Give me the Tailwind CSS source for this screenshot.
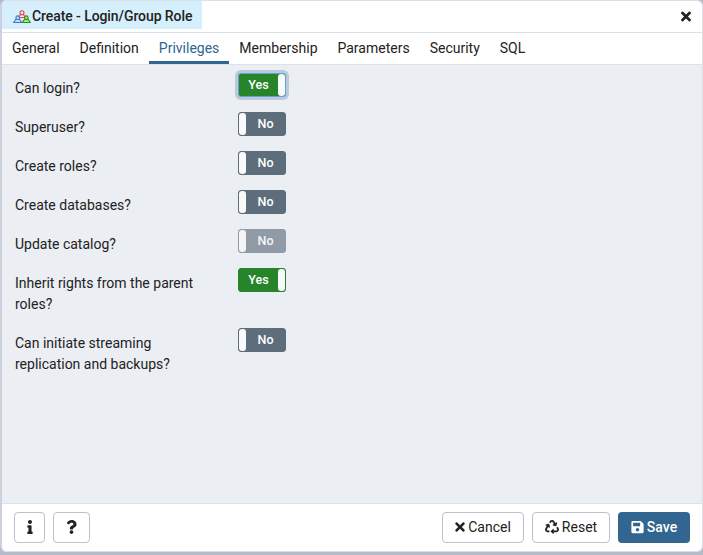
<!DOCTYPE html>
<html lang="en">
<head>
<meta charset="utf-8">
<title>Create - Login/Group Role</title>
<script src="https://cdn.jsdelivr.net/npm/@tailwindcss/browser@4"></script>
</head>
<body class="h-[555px] w-[703px] overflow-hidden bg-[#b3bccb] font-['Roboto','Liberation_Sans',sans-serif] text-sm/[21px] text-[#222]">
<svg class="hidden">
  <symbol id="close" viewBox="0 0 352 512"><path d="M242.72 256l100.07-100.07c12.28-12.28 12.28-32.19 0-44.48l-22.24-22.24c-12.28-12.28-32.19-12.28-44.48 0L176 189.28 75.93 89.21c-12.28-12.28-32.19-12.28-44.48 0L9.21 111.45c-12.28 12.28-12.28 32.19 0 44.48L109.28 256 9.21 356.07c-12.28 12.28-12.28 32.19 0 44.48l22.24 22.24c12.28 12.28 32.2 12.28 44.48 0L176 322.72l100.07 100.07c12.28 12.28 32.2 12.28 44.48 0l22.24-22.24c12.28-12.28 12.28-32.19 0-44.48L242.72 256z"/></symbol>
</svg>
<main class="flex h-[552px] w-[703px] flex-col overflow-hidden rounded-md border border-l-2 border-[#dde0e6] border-l-[#ccd1dd] bg-white">
  <header class="flex h-8 shrink-0 justify-between border-b border-[#dde0e6]">
    <div class="flex h-7 w-[200px] items-center bg-[#d6effc] pt-0.5 pl-[11px] font-medium">
      <svg class="mt-0.5 h-[14px] w-[18px] shrink-0" viewBox="0 0 18 14" stroke-width="1.100">
        <g fill="#fbe9ea" stroke="#e0444e"><path d="M5.700 7.500L7.500 4.500h3L12.300 7.500z"/><circle cx="9" cy="2.800" r="2"/></g>
        <g fill="#c5dcfa" stroke="#4279cb"><path d="M.7 12.500L3.200 8.800h3L8.700 12.500z"/><circle cx="4.700" cy="7.700" r="1.800"/></g>
        <g fill="#a7e56c" stroke="#358d22"><path d="M9.300 12.500L11.800 8.800h3L17.300 12.500z"/><circle cx="13.300" cy="7.700" r="1.800"/></g>
      </svg>
      <h1 class="ml-px whitespace-nowrap tracking-[-0.08px]">Create - Login/Group Role</h1>
    </div>
    <button class="mr-[11px] flex items-center" aria-label="Close"><svg class="mb-px h-[15px] w-[10px]" fill="currentColor"><use href="#close"/></svg></button>
  </header>
  <nav class="flex h-8 shrink-0 border-b border-[#dde0e6] leading-[30px]">
    <a class="px-[10px]">General</a>
    <a class="px-[10px]">Definition</a>
    <a class="border-b-3 border-[#326690] px-[10px] text-[#326690]">Privileges</a>
    <a class="px-[10px]">Membership</a>
    <a class="px-[10px]">Parameters</a>
    <a class="px-[10px]">Security</a>
    <a class="px-[10px]">SQL</a>
  </nav>
  <section class="flex flex-1 flex-col gap-[15px] bg-[#ebeef3] pt-2 pl-[13px]">
    <div class="flex min-h-6"><div class="w-[223px] pt-[5px] pr-5 -mb-[2px]">Can login?</div>
      <div class="flex h-6 w-12 rounded-[3px] border border-[#6aa0cf] bg-[#26852b] text-[12.5px]/[22px] font-medium text-white ring-3 ring-[#bbcadb]"><span class="flex-1 text-center">Yes</span><span class="w-[7px] rounded-[3px] bg-[#f8f9fa]"></span></div></div>
    <div class="flex h-6"><div class="w-[223px] pt-[5px]">Superuser?</div>
      <div class="flex h-6 w-12 rounded-[3px] border border-[#5e6d7c] bg-[#5e6d7c] text-[12.5px]/[22px] font-medium text-white"><span class="w-[7px] rounded-[3px] bg-[#f8f9fa]"></span><span class="flex-1 text-center">No</span></div></div>
    <div class="flex h-6"><div class="w-[223px] pt-[5px]">Create roles?</div>
      <div class="flex h-6 w-12 rounded-[3px] border border-[#5e6d7c] bg-[#5e6d7c] text-[12.5px]/[22px] font-medium text-white"><span class="w-[7px] rounded-[3px] bg-[#f8f9fa]"></span><span class="flex-1 text-center">No</span></div></div>
    <div class="flex h-6"><div class="w-[223px] pt-[5px]">Create databases?</div>
      <div class="flex h-6 w-12 rounded-[3px] border border-[#5e6d7c] bg-[#5e6d7c] text-[12.5px]/[22px] font-medium text-white"><span class="w-[7px] rounded-[3px] bg-[#f8f9fa]"></span><span class="flex-1 text-center">No</span></div></div>
    <div class="flex h-6"><div class="w-[223px] pt-[5px]">Update catalog?</div>
      <div class="flex h-6 w-12 rounded-[3px] border border-[#909ba6] bg-[#909ba6] text-[12.5px]/[22px] font-medium text-[#f5f6f8]"><span class="w-[7px] rounded-[3px] bg-[#f3f5f8]"></span><span class="flex-1 text-center">No</span></div></div>
    <div class="flex h-[45px]"><div class="w-[223px] pt-[5px] pr-5">Inherit rights from the parent roles?</div>
      <div class="flex h-6 w-12 rounded-[3px] border border-[#26852b] bg-[#26852b] text-[12.5px]/[22px] font-medium text-white"><span class="flex-1 text-center">Yes</span><span class="w-[7px] rounded-[3px] bg-[#f8f9fa]"></span></div></div>
    <div class="flex h-[45px]"><div class="w-[223px] pt-[5px] pr-5">Can initiate streaming replication and backups?</div>
      <div class="flex h-6 w-12 rounded-[3px] border border-[#5e6d7c] bg-[#5e6d7c] text-[12.5px]/[22px] font-medium text-white"><span class="w-[7px] rounded-[3px] bg-[#f8f9fa]"></span><span class="flex-1 text-center">No</span></div></div>
  </section>
  <footer class="flex h-12 shrink-0 items-center gap-2 border-t border-[#dde0e6] pr-3 pl-3">
    <button class="flex h-[31px] w-[31px] items-center justify-center rounded border border-[#bac1cd]" aria-label="Information"><svg class="mb-px h-[14px] w-[6px]" viewBox="0 0 192 512" fill="currentColor"><path d="M20 424.229h20V279.771H20c-11.046 0-20-8.954-20-20V212c0-11.046 8.954-20 20-20h112c11.046 0 20 8.954 20 20v212.229h20c11.046 0 20 8.954 20 20V492c0 11.046-8.954 20-20 20H20c-11.046 0-20-8.954-20-20v-47.771c0-11.046 8.954-20 20-20zM96 0C56.235 0 24 32.235 24 72s32.235 72 72 72 72-32.235 72-72S135.764 0 96 0z"/></svg></button>
    <button class="flex h-[31px] w-[37px] items-center justify-center rounded border border-[#bac1cd]" aria-label="Help"><svg class="mb-px h-[14px] w-[11px]" viewBox="0 0 384 512" fill="currentColor"><path d="M202.021 0C122.202 0 70.503 32.703 29.914 91.026c-7.363 10.58-5.093 25.086 5.178 32.874l43.138 32.709c10.373 7.865 25.132 6.026 33.253-4.148 25.049-31.381 43.63-49.449 82.757-49.449 30.764 0 68.816 19.799 68.816 49.631 0 22.552-18.617 34.134-48.993 51.164-35.423 19.86-82.299 44.576-82.299 106.405V320c0 13.255 10.745 24 24 24h72.471c13.255 0 24-10.745 24-24v-5.773c0-42.86 125.268-44.645 125.268-160.627C377.504 66.256 286.902 0 202.021 0zM192 373.459c-38.196 0-69.271 31.075-69.271 69.271 0 38.195 31.075 69.27 69.271 69.27s69.271-31.075 69.271-69.271-31.075-69.27-69.271-69.27z"/></svg></button>
    <button class="ml-auto flex h-[31px] w-[82px] items-center justify-center gap-[3px] rounded border border-[#bac1cd]"><svg class="mb-px h-[14px] w-[10px]" fill="currentColor"><use href="#close"/></svg>Cancel</button>
    <button class="flex h-[31px] w-[78px] items-center justify-center gap-[3px] rounded border border-[#bac1cd]"><svg class="mb-px size-[14px]" viewBox="0 0 512 512" fill="currentColor"><path d="M184.561 261.903c3.232 13.997-12.123 24.635-24.068 17.168l-40.736-25.455-50.867 81.402C55.606 356.273 70.96 384 96.012 384H148c6.627 0 12 5.373 12 12v40c0 6.627-5.373 12-12 12H96.115c-75.334 0-121.302-83.048-81.408-146.88l50.822-81.388-40.725-25.448c-12.081-7.547-8.966-25.961 4.879-29.158l110.237-25.45c8.611-1.988 17.201 3.381 19.189 11.99l25.452 110.237zm98.561-182.915l41.289 66.076-40.74 25.457c-12.051 7.528-9 25.953 4.879 29.158l110.237 25.45c8.672 1.999 17.215-3.438 19.189-11.99l25.45-110.237c3.197-13.844-11.99-24.719-24.068-17.168l-40.687 25.424-41.263-66.082c-37.521-60.033-125.209-60.171-162.816 0l-17.963 28.766c-3.51 5.62-1.8 13.021 3.82 16.533l33.919 21.195c5.62 3.512 13.024 1.803 16.536-3.817l17.961-28.743c12.712-20.341 41.973-19.676 54.257-.022zM497.288 301.12l-27.515-44.065c-3.511-5.623-10.916-7.334-16.538-3.821l-33.861 21.159c-5.62 3.512-7.33 10.915-3.818 16.536l27.564 44.112c13.257 21.211-2.057 48.96-27.136 48.96H320V336.02c0-14.213-17.242-21.383-27.313-11.313l-80 79.981c-6.249 6.248-6.249 16.379 0 22.627l80 79.989C302.689 517.308 320 510.3 320 495.989V448h95.88c75.274 0 121.335-82.997 81.408-146.88z"/></svg>Reset</button>
    <button class="flex h-[31px] w-[72px] items-center justify-center gap-[3px] rounded bg-[#326690] font-medium text-white"><svg class="mb-px h-[14px] w-[13px]" viewBox="0 0 448 512" fill="currentColor"><path d="M433.941 129.941l-83.882-83.882A48 48 0 0 0 316.118 32H48C21.49 32 0 53.49 0 80v352c0 26.51 21.49 48 48 48h352c26.51 0 48-21.49 48-48V163.882a48 48 0 0 0-14.059-33.941zM224 416c-35.346 0-64-28.654-64-64 0-35.346 28.654-64 64-64s64 28.654 64 64c0 35.346-28.654 64-64 64zm96-304.52V212c0 6.627-5.373 12-12 12H76c-6.627 0-12-5.373-12-12V108c0-6.627 5.373-12 12-12h228.52c3.183 0 6.235 1.264 8.485 3.515l3.48 3.48A11.996 11.996 0 0 1 320 111.48z"/></svg>Save</button>
  </footer>
</main>
</body>
</html>
